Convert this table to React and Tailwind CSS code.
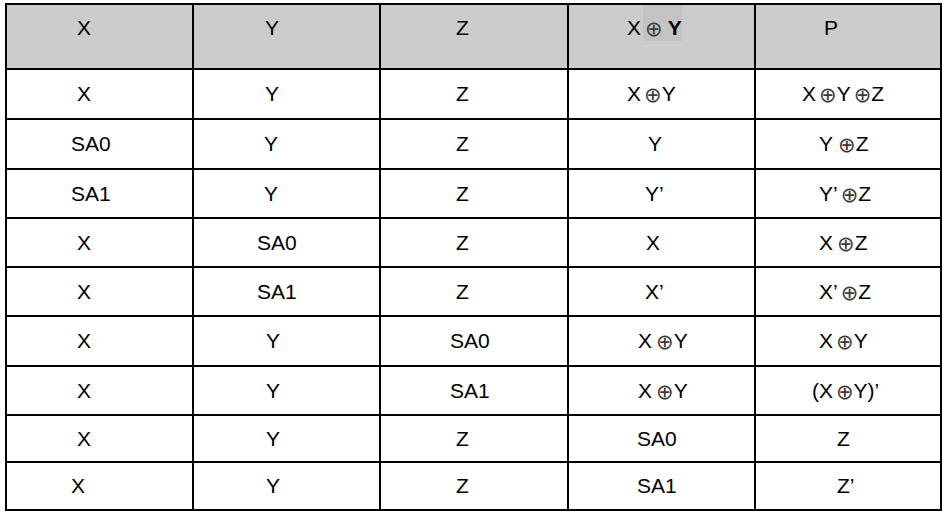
import React from 'react'

const OP = '⊕'

// each cell: [text, padding-left class, gap before the operator]
const header = [
  ['X', 'pl-[70px]'],
  ['Y', 'pl-[71px]'],
  ['Z', 'pl-[75px]'],
  ['HEAD', 'pl-[58px]'],
  ['P', 'pl-[68px]'],
]

const rows = [
  [['X', 'pl-[70px]'], ['Y', 'pl-[71px]'], ['Z', 'pl-[75px]'], ['X⊕Y', 'pl-[58px]'], ['X⊕Y⊕Z', 'pl-[46px]']],
  [['SA0', 'pl-[64px]'], ['Y', 'pl-[70px]'], ['Z', 'pl-[75px]'], ['Y', 'pl-[79px]'], ['Y⊕Z', 'pl-[63px]', 'ml-[5px]']],
  [['SA1', 'pl-[64px]'], ['Y', 'pl-[70px]'], ['Z', 'pl-[75px]'], ['Y’', 'pl-[76px]'], ['Y’⊕Z', 'pl-[63px]']],
  [['X', 'pl-[70px]'], ['SA0', 'pl-[63px]'], ['Z', 'pl-[75px]'], ['X', 'pl-[77px]'], ['X⊕Z', 'pl-[63px]', 'ml-[4px]']],
  [['X', 'pl-[70px]'], ['SA1', 'pl-[63px]'], ['Z', 'pl-[75px]'], ['X’', 'pl-[76px]'], ['X’⊕Z', 'pl-[63px]']],
  [['X', 'pl-[70px]'], ['Y', 'pl-[72px]'], ['SA0', 'pl-[69px]'], ['X⊕Y', 'pl-[69px]', 'ml-[4px]'], ['X⊕Y', 'pl-[63px]']],
  [['X', 'pl-[70px]'], ['Y', 'pl-[72px]'], ['SA1', 'pl-[69px]'], ['X⊕Y', 'pl-[69px]', 'ml-[4px]'], ['(X⊕Y)’', 'pl-[56px]']],
  [['X', 'pl-[70px]'], ['Y', 'pl-[72px]'], ['Z', 'pl-[75px]'], ['SA0', 'pl-[68px]'], ['Z', 'pl-[81px]']],
  [['X', 'pl-[64px]'], ['Y', 'pl-[72px]'], ['Z', 'pl-[75px]'], ['SA1', 'pl-[68px]'], ['Z’', 'pl-[81px]']],
]

const Op = ({ gap = 'ml-[3px]' }) => (
  <span className={`relative top-[1px] font-['DejaVu_Sans'] text-[21px] leading-none text-[#3a3a3a] ${gap}`}>{OP}</span>
)

const Expr = ({ text, gap }) => {
  const parts = text.split(OP)
  return (
    <>
      {parts.map((p, i) => (
        <React.Fragment key={i}>
          {i > 0 && <Op gap={gap} />}
          {p}
        </React.Fragment>
      ))}
    </>
  )
}

const HeadExpr = () => (
  <>
    X
    <span className="bg-[#c3c3c3] pt-[11px] pb-[2px] ml-[2px]">
      <Op gap="ml-[2px]" />
      <span className="font-bold ml-[5px]">Y</span>
    </span>
  </>
)

export default function App() {
  return (
    <div className="w-[945px] h-[514px] bg-white pt-[3px] pl-[5px] font-['Liberation_Sans',Arial,sans-serif] text-[21px] leading-[24px] text-black">
      <div className="grid w-[937px] grid-cols-[187px_187px_188px_187px_186px] grid-rows-[65px_50px_50px_49px_49px_49px_50px_49px_47px_48px] border-l-2 border-t-2 border-black">
        {header.map(([t, pl], i) => (
          <div key={'h' + i} className={`bg-[#cccccc] border-r-2 border-b-2 border-black pt-[11px] whitespace-pre ${pl}`}>
            {t === 'HEAD' ? <HeadExpr /> : t}
          </div>
        ))}
        {rows.map((r, ri) =>
          r.map(([t, pl, gap], ci) => (
            <div key={ri + '-' + ci} className={`flex items-center border-r-2 border-b-2 border-black whitespace-pre ${pl}`}>
              <span><Expr text={t} gap={gap} /></span>
            </div>
          ))
        )}
      </div>
    </div>
  )
}
